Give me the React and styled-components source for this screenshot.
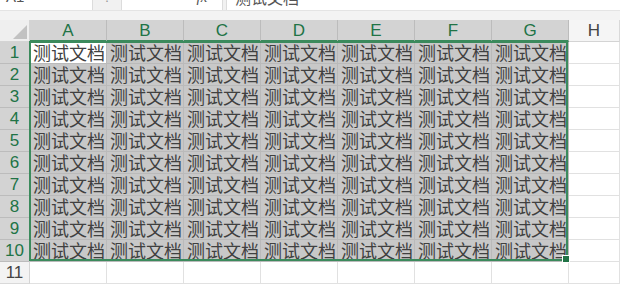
import React from 'react'
import styled, { createGlobalStyle } from 'styled-components'

const GlobalStyle = createGlobalStyle`
  html, body {
    margin: 0;
    padding: 0;
    background: #ffffff;
    overflow: hidden;
  }
`;

const COLS = ['A', 'B', 'C', 'D', 'E', 'F', 'G', 'H'];
const ROWS = Array.from({ length: 11 }, (_, i) => i + 1);
const COL_W = 77;
const ROW_H = 22;
const HEAD_W = 30;
const TEXT = '测试文档';

const isSel = (r, c) => r <= 10 && c < 7;

export default function App() {
  return (
    <Page>
      <GlobalStyle />
      <FormulaBar>
        <NameBox>A1</NameBox>
        <Dots>⋮</Dots>
        <Tools>
          <Tool $w={30}>✕</Tool>
          <Tool $w={30}>✓</Tool>
          <Tool $w={40}><i>fx</i></Tool>
        </Tools>
        <Input>{TEXT}</Input>
      </FormulaBar>
      <Band />
      <Sheet>
        <Grid>
          <Corner>
            <svg width="14" height="14" viewBox="0 0 14 14">
              <polygon points="14,0 14,14 0,14" fill="#c2c2c2" />
            </svg>
          </Corner>
          {COLS.map((c, i) => (
            <ColHead key={c} $sel={i < 7}>{c}</ColHead>
          ))}
          {ROWS.map((r) => (
            <React.Fragment key={r}>
              <RowHead $sel={r <= 10}>{r}</RowHead>
              {COLS.map((c, i) => (
                <Cell key={c} $sel={isSel(r, i)} $active={r === 1 && i === 0}>
                  {isSel(r, i) ? TEXT : ''}
                </Cell>
              ))}
            </React.Fragment>
          ))}
        </Grid>
        <Selection
          style={{
            left: HEAD_W - 1,
            top: ROW_H - 1,
            width: COL_W * 7,
            height: ROW_H * 10,
          }}
        >
          <Handle />
        </Selection>
      </Sheet>
    </Page>
  );
}

const Page = styled.div`
  width: 620px;
  height: 292px;
  overflow: hidden;
  font-family: "Noto Sans CJK SC", "Noto Sans", sans-serif;
`;

const FormulaBar = styled.div`
  display: flex;
  height: 24px;
  margin-top: -14px;
  background: #f1f1f1;
  border-bottom: 1px solid #e4e4e4;
  font-size: 15px;
  color: #555;
`;

const NameBox = styled.div`
  width: 86px;
  padding-left: 6px;
  background: #fff;
  border-right: 1px solid #dcdcdc;
  line-height: 22px;
  font-family: "Liberation Sans", sans-serif;
`;

const Dots = styled.div`
  width: 28px;
  text-align: center;
  line-height: 22px;
  color: #9a9a9a;
  font-family: "DejaVu Sans", sans-serif;
  font-size: 13px;
`;

const Tools = styled.div`
  display: flex;
  width: 100px;
  background: #fff;
  border-left: 1px solid #dcdcdc;
  border-right: 1px solid #dcdcdc;
`;

const Tool = styled.div`
  width: ${(p) => p.$w}px;
  text-align: center;
  line-height: 22px;
  color: #9a9a9a;
  font-family: "DejaVu Sans", sans-serif;
  font-size: 13px;
  i {
    font-family: "Liberation Serif", serif;
    font-size: 15px;
    color: #555;
  }
`;

const Input = styled.div`
  flex: 1;
  margin-left: 3px;
  padding-left: 8px;
  background: #fff;
  border-left: 1px solid #dcdcdc;
  line-height: 22px;
  font-size: 16px;
  color: #555;
`;

const Band = styled.div`
  height: 9px;
  background: #f3f3f3;
`;

const Sheet = styled.div`
  position: relative;
`;

const Grid = styled.div`
  display: grid;
  grid-template-columns: ${HEAD_W}px repeat(7, ${COL_W}px) 1fr;
  grid-auto-rows: ${ROW_H}px;
`;

const Corner = styled.div`
  display: flex;
  align-items: flex-end;
  justify-content: flex-end;
  padding: 0 2px 2px 0;
  background: #efefef;
  border-right: 1px solid #d4d4d4;
  border-bottom: 1px solid #d4d4d4;
  box-sizing: border-box;
`;

const ColHead = styled.div`
  box-sizing: border-box;
  text-align: center;
  font-family: "Liberation Sans", sans-serif;
  font-size: 17px;
  line-height: 22px;
  color: ${(p) => (p.$sel ? '#217346' : '#444')};
  background: ${(p) => (p.$sel ? '#d3d3d3' : '#f5f5f5')};
  border-right: 1px solid ${(p) => (p.$sel ? '#bcbcbc' : '#d9d9d9')};
  border-bottom: ${(p) => (p.$sel ? '2px solid #3b8a5c' : '1px solid #d4d4d4')};
`;

const RowHead = styled.div`
  box-sizing: border-box;
  text-align: center;
  font-family: "Liberation Sans", sans-serif;
  font-size: 17px;
  line-height: 21px;
  color: ${(p) => (p.$sel ? '#217346' : '#444')};
  background: ${(p) => (p.$sel ? '#d3d3d3' : '#f3f3f3')};
  border-bottom: 1px solid ${(p) => (p.$sel ? '#bcbcbc' : '#d9d9d9')};
  border-right: 1px solid #d4d4d4;
`;

const Cell = styled.div`
  box-sizing: border-box;
  overflow: hidden;
  white-space: nowrap;
  padding-left: 3px;
  font-size: 18px;
  line-height: 21px;
  color: #404040;
  background: ${(p) => (p.$active ? '#ffffff' : p.$sel ? '#c8c8c8' : '#ffffff')};
  border-right: 1px solid ${(p) => (p.$sel ? '#bababa' : '#e1e1e1')};
  border-bottom: 1px solid ${(p) => (p.$sel ? '#bababa' : '#e1e1e1')};
`;

const Selection = styled.div`
  position: absolute;
  box-sizing: border-box;
  border: 2px solid #3b8a5c;
  pointer-events: none;
`;

const Handle = styled.div`
  position: absolute;
  right: -4px;
  bottom: -4px;
  width: 6px;
  height: 6px;
  background: #217346;
  border: 1px solid #fff;
`;
